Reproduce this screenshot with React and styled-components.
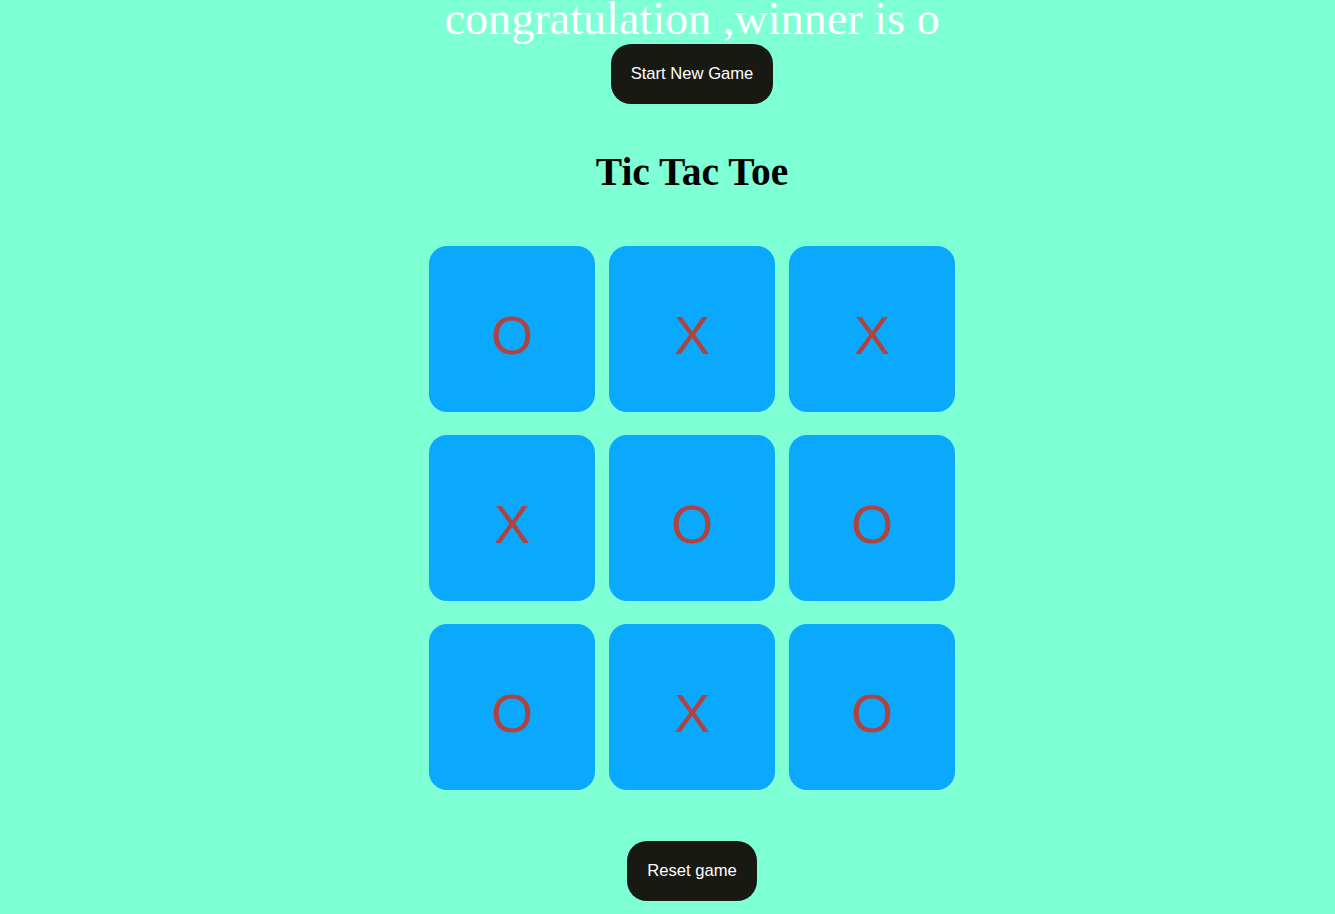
import React, { useState } from 'react';
import styled, { createGlobalStyle } from 'styled-components';

const GlobalStyle = createGlobalStyle`
  html, body {
    margin: 0;
    background: #7fffd4;
  }
  body {
    font-family: "Liberation Serif", "Times New Roman", serif;
  }
`;

const Main = styled.div`
  display: flex;
  flex-direction: column;
  align-items: center;
  padding-left: 49px;
  min-height: 914px;
  overflow: hidden;
`;

const Message = styled.div`
  font-size: 46.2px;
  line-height: 46px;
  color: #ffffff;
  margin-top: -4px;
  white-space: nowrap;
`;

const Button = styled.button`
  height: 60px;
  padding: 0 20px;
  margin-top: ${p => p.$top}px;
  border: none;
  border-radius: 20px;
  background: #191913;
  color: #ffffff;
  font-family: "Liberation Sans", Arial, sans-serif;
  font-size: 16.6px;
  cursor: pointer;
`;

const Title = styled.h1`
  margin: 48px 0 0;
  font-size: 39.5px;
  line-height: 40px;
  font-weight: bold;
  color: #000000;
`;

const Board = styled.div`
  margin-top: 54px;
  display: grid;
  grid-template-columns: repeat(3, 166px);
  grid-auto-rows: 166px;
  column-gap: 14px;
  row-gap: 23px;
`;

const Cell = styled.button`
  display: flex;
  align-items: center;
  justify-content: center;
  padding: 12px 0 0;
  border: none;
  border-radius: 18px;
  background: #0ba9fd;
  color: #b0423f;
  font-family: "Liberation Sans", Arial, sans-serif;
  font-size: 54px;
  cursor: pointer;
`;

export default function App() {
  const [board] = useState(['O', 'X', 'X', 'X', 'O', 'O', 'O', 'X', 'O']);
  return (
    <>
      <GlobalStyle />
      <Main>
        <Message>congratulation ,winner is o</Message>
        <Button $top={2}>Start New Game</Button>
        <Title>Tic Tac Toe</Title>
        <Board>
          {board.map((v, i) => (
            <Cell key={i}>{v}</Cell>
          ))}
        </Board>
        <Button $top={51}>Reset game</Button>
      </Main>
    </>
  );
}
